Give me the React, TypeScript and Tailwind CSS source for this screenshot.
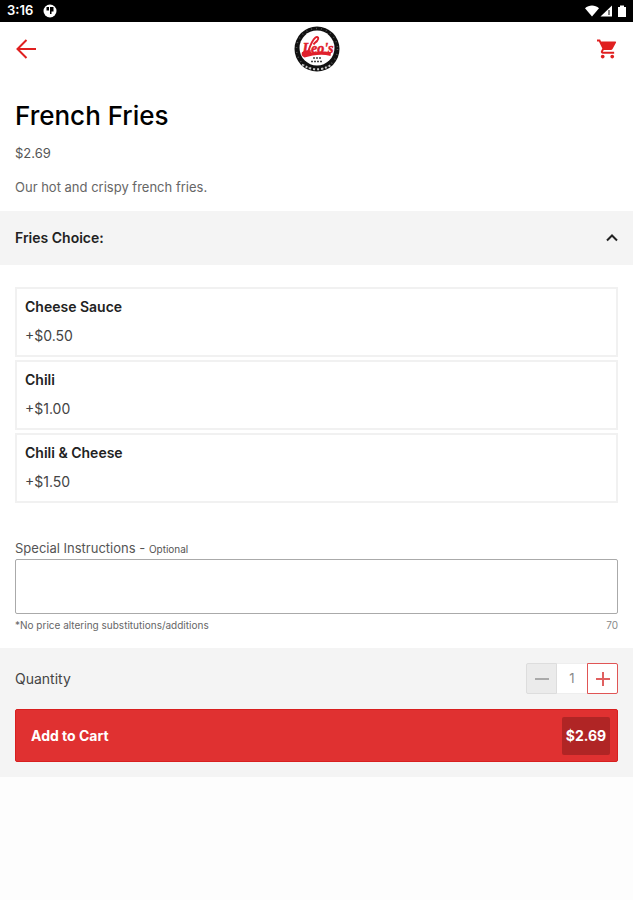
import React, { useState } from 'react';

interface Choice {
  id: string;
  name: string;
  price: number;
}

const BASE_PRICE = 2.69;
const MAX_NOTE = 70;

const CHOICES: Choice[] = [
  { id: 'cheese', name: 'Cheese Sauce', price: 0.5 },
  { id: 'chili', name: 'Chili', price: 1 },
  { id: 'chili-cheese', name: 'Chili & Cheese', price: 1.5 }
];

const StatusBar: React.FC = () => (
  <div className="flex h-[22px] items-center justify-between bg-black pl-[7px] pr-1 text-white">
    <div className="flex items-center gap-2.5">
      <span className="text-[13px] font-semibold">3:16</span>
      <svg width="14" height="14" viewBox="0 0 14 14" aria-hidden="true">
        <circle cx="7" cy="7" r="6.5" fill="#fff" />
        <path d="M3.500 3h2.500v3.500H3.500zM7 3h3.500v4.500H8.500V10H7z" fill="#000" />
      </svg>
    </div>
    <svg width="44" height="14" viewBox="0 0 44 14" fill="#fff" aria-hidden="true">
      <path d="M0 4.200C4 .7 10 .7 14 4.200L7 12.500z" />
      <path d="M27 1.500V12.500H15.500z" />
      <path d="M24 6v5" stroke="#000" strokeWidth="1" />
      <path d="M33 3h2V1.500h4V3h2v10h-8z" />
    </svg>
  </div>
);

const Logo: React.FC = () => (
  <svg width="46" height="46" viewBox="0 0 46 46" role="img" aria-label="Leo's">
    <circle cx="23" cy="23" r="22.500" fill="#111" />
    <circle cx="23" cy="23" r="20.500" fill="none" stroke="#555" strokeWidth="1.500" strokeDasharray="1 4" />
    <circle cx="23" cy="22" r="17.500" fill="#fff" />
    <path d="M8 26.500C11 23.500 16 23.500 18 27C25 25 32 25 37 26.500L36.500 30C28 27.500 19 29 10.500 31.500C8 30.500 7 28.500 8 26.500z" fill="#e0202b" />
    <path d="M14 26C16 20 18 14 21.500 11.500C24 10 25.500 12.500 23 15C21.500 16.500 20.500 17 19.500 18.500" fill="none" stroke="#e0202b" strokeWidth="2" />
    <text x="24" y="27" textAnchor="middle" fontFamily="Liberation Serif, serif" fontStyle="italic" fontWeight="700" fontSize="14" fill="#e0202b" stroke="#e0202b" strokeWidth="0.500">Leo's</text>
    <path d="M19 32h9M17 35.500h12" stroke="#444" strokeWidth="1.500" strokeDasharray="2 1" />
    <path d="M8 38.500Q23 48 38 38.500" fill="none" stroke="#ccc" strokeWidth="2" strokeDasharray="2 2" />
  </svg>
);

export default function App() {
  const [isOpen, setIsOpen] = useState(true);
  const [selected, setSelected] = useState<string | null>(null);
  const [note, setNote] = useState('');
  const [quantity, setQuantity] = useState(1);

  const extra = CHOICES.find(c => c.id === selected)?.price ?? 0;
  const total = (BASE_PRICE + extra) * quantity;

  return (
    <div className="min-h-screen bg-[#fdfdfd] font-['Inter',sans-serif] text-[#222]">
      <StatusBar />

      <header className="flex h-[53px] items-center justify-between bg-white px-4">
        <button aria-label="Back" className="w-6 text-[#e02020]">
          <svg width="20" height="20" viewBox="0 0 20 20" fill="none" stroke="currentColor" strokeWidth="2" aria-hidden="true">
            <path d="M20 10H2M10.500 1L1.500 10L10.500 19" />
          </svg>
        </button>
        <Logo />
        <button aria-label="Cart" className="flex w-6 justify-end text-[#e02020]">
          <svg width="20" height="20" viewBox="1 2 21 20" fill="currentColor" aria-hidden="true">
            <path d="M7 18c-1.100 0-1.990.900-1.990 2S5.900 22 7 22s2-.900 2-2-.900-2-2-2zM1 2v2h2l3.600 7.590-1.350 2.450c-.160.280-.250.610-.250.960 0 1.100.900 2 2 2h12v-2H7.420c-.140 0-.250-.110-.250-.250l.030-.120.900-1.630h7.450c.750 0 1.410-.410 1.750-1.030l3.580-6.490A1 1 0 0 0 20 4H5.210l-.940-2H1zm16 16c-1.100 0-1.990.900-1.990 2s.890 2 1.990 2 2-.900 2-2-.900-2-2-2z" />
          </svg>
        </button>
      </header>

      <main className="bg-white">
        <section className="px-[15px] pt-[25px] pb-[14px]">
          <h1 className="text-[26px] leading-8 font-medium text-black">French Fries</h1>
          <p className="mt-[11px] text-[13px] leading-5 text-[#555]">$2.69</p>
          <p className="mt-[14px] text-[13px] leading-5 text-[#666]">Our hot and crispy french fries.</p>
        </section>

        <button
          onClick={() => setIsOpen(!isOpen)}
          aria-expanded={isOpen}
          className="flex h-[54px] w-full items-center justify-between bg-[#f4f4f4] px-[15px] text-sm font-semibold"
        >
          <span>Fries Choice:</span>
          <svg
            width="12" height="10" viewBox="0 0 12 10" fill="none" stroke="#222" strokeWidth="2"
            className={isOpen ? '' : 'rotate-180'}
            aria-hidden="true"
          >
            <path d="M1 7.500L6 2.500L11 7.500" />
          </svg>
        </button>

        {isOpen && (
          <div className="flex flex-col gap-[3px] px-[15px] pt-[22px]">
            {CHOICES.map(choice => (
              <button
                key={choice.id}
                onClick={() => setSelected(selected === choice.id ? null : choice.id)}
                aria-pressed={selected === choice.id}
                className={`border-2 bg-white px-2 pt-2 pb-[9px] text-left text-sm ${selected === choice.id ? 'border-[#e03131]' : 'border-[#f1f1f1]'}`}
              >
                <span className="block leading-5 font-semibold">{choice.name}</span>
                <span className="mt-[9px] block leading-5 text-[#444]">+${choice.price.toFixed(2)}</span>
              </button>
            ))}
          </div>
        )}

        <section className="px-[15px] pt-[35px] pb-[15px]">
          <label htmlFor="note" className="block text-[13px] leading-5 text-[#555]">
            Special Instructions - <span className="text-[10px]">Optional</span>
          </label>
          <textarea
            id="note"
            value={note}
            maxLength={MAX_NOTE}
            onChange={(e) => setNote(e.target.value)}
            className="block h-[55px] w-full resize-none rounded-xs border border-[#aaa] bg-white px-2 py-1 text-sm outline-none"
          />
          <div className="flex justify-between pt-[3px] text-[10px] leading-4 text-[#666]">
            <span>*No price altering substitutions/additions</span>
            <span className="text-[#888]">{MAX_NOTE - note.length}</span>
          </div>
        </section>
      </main>

      <footer className="bg-[#f4f4f4] p-[15px]">
        <div className="flex items-center justify-between">
          <span className="text-sm text-[#444]">Quantity</span>
          <div className="flex h-[31px]">
            <button
              aria-label="Decrease quantity"
              disabled={quantity === 1}
              onClick={() => setQuantity(quantity - 1)}
              className="flex w-[31px] items-center justify-center rounded-l-xs border border-[#ddd] bg-[#ebebeb] text-[#aaa]"
            >
              <svg width="14" height="14" viewBox="0 0 14 14" stroke="currentColor" strokeWidth="2" aria-hidden="true">
                <path d="M0 7h14" />
              </svg>
            </button>
            <output className="flex w-[30px] items-center justify-center border-y border-[#eee] bg-white text-[13px] text-[#888]">{quantity}</output>
            <button
              aria-label="Increase quantity"
              onClick={() => setQuantity(quantity + 1)}
              className="flex w-[31px] items-center justify-center rounded-r-xs border border-[#e05555] bg-white text-[#e06060]"
            >
              <svg width="14" height="14" viewBox="0 0 14 14" stroke="currentColor" strokeWidth="2" aria-hidden="true">
                <path d="M0 7h14M7 0v14" />
              </svg>
            </button>
          </div>
        </div>

        <button className="mt-[15px] flex h-[53px] w-full items-center justify-between rounded-xs border border-[#d81f1f] bg-[#e03131] pr-[7px] pl-[15px] text-sm font-bold text-white">
          <span>Add to Cart</span>
          <span className="flex h-[38px] w-12 items-center justify-center rounded-xs bg-[#b02525]">${total.toFixed(2)}</span>
        </button>
      </footer>
    </div>
  );
}
